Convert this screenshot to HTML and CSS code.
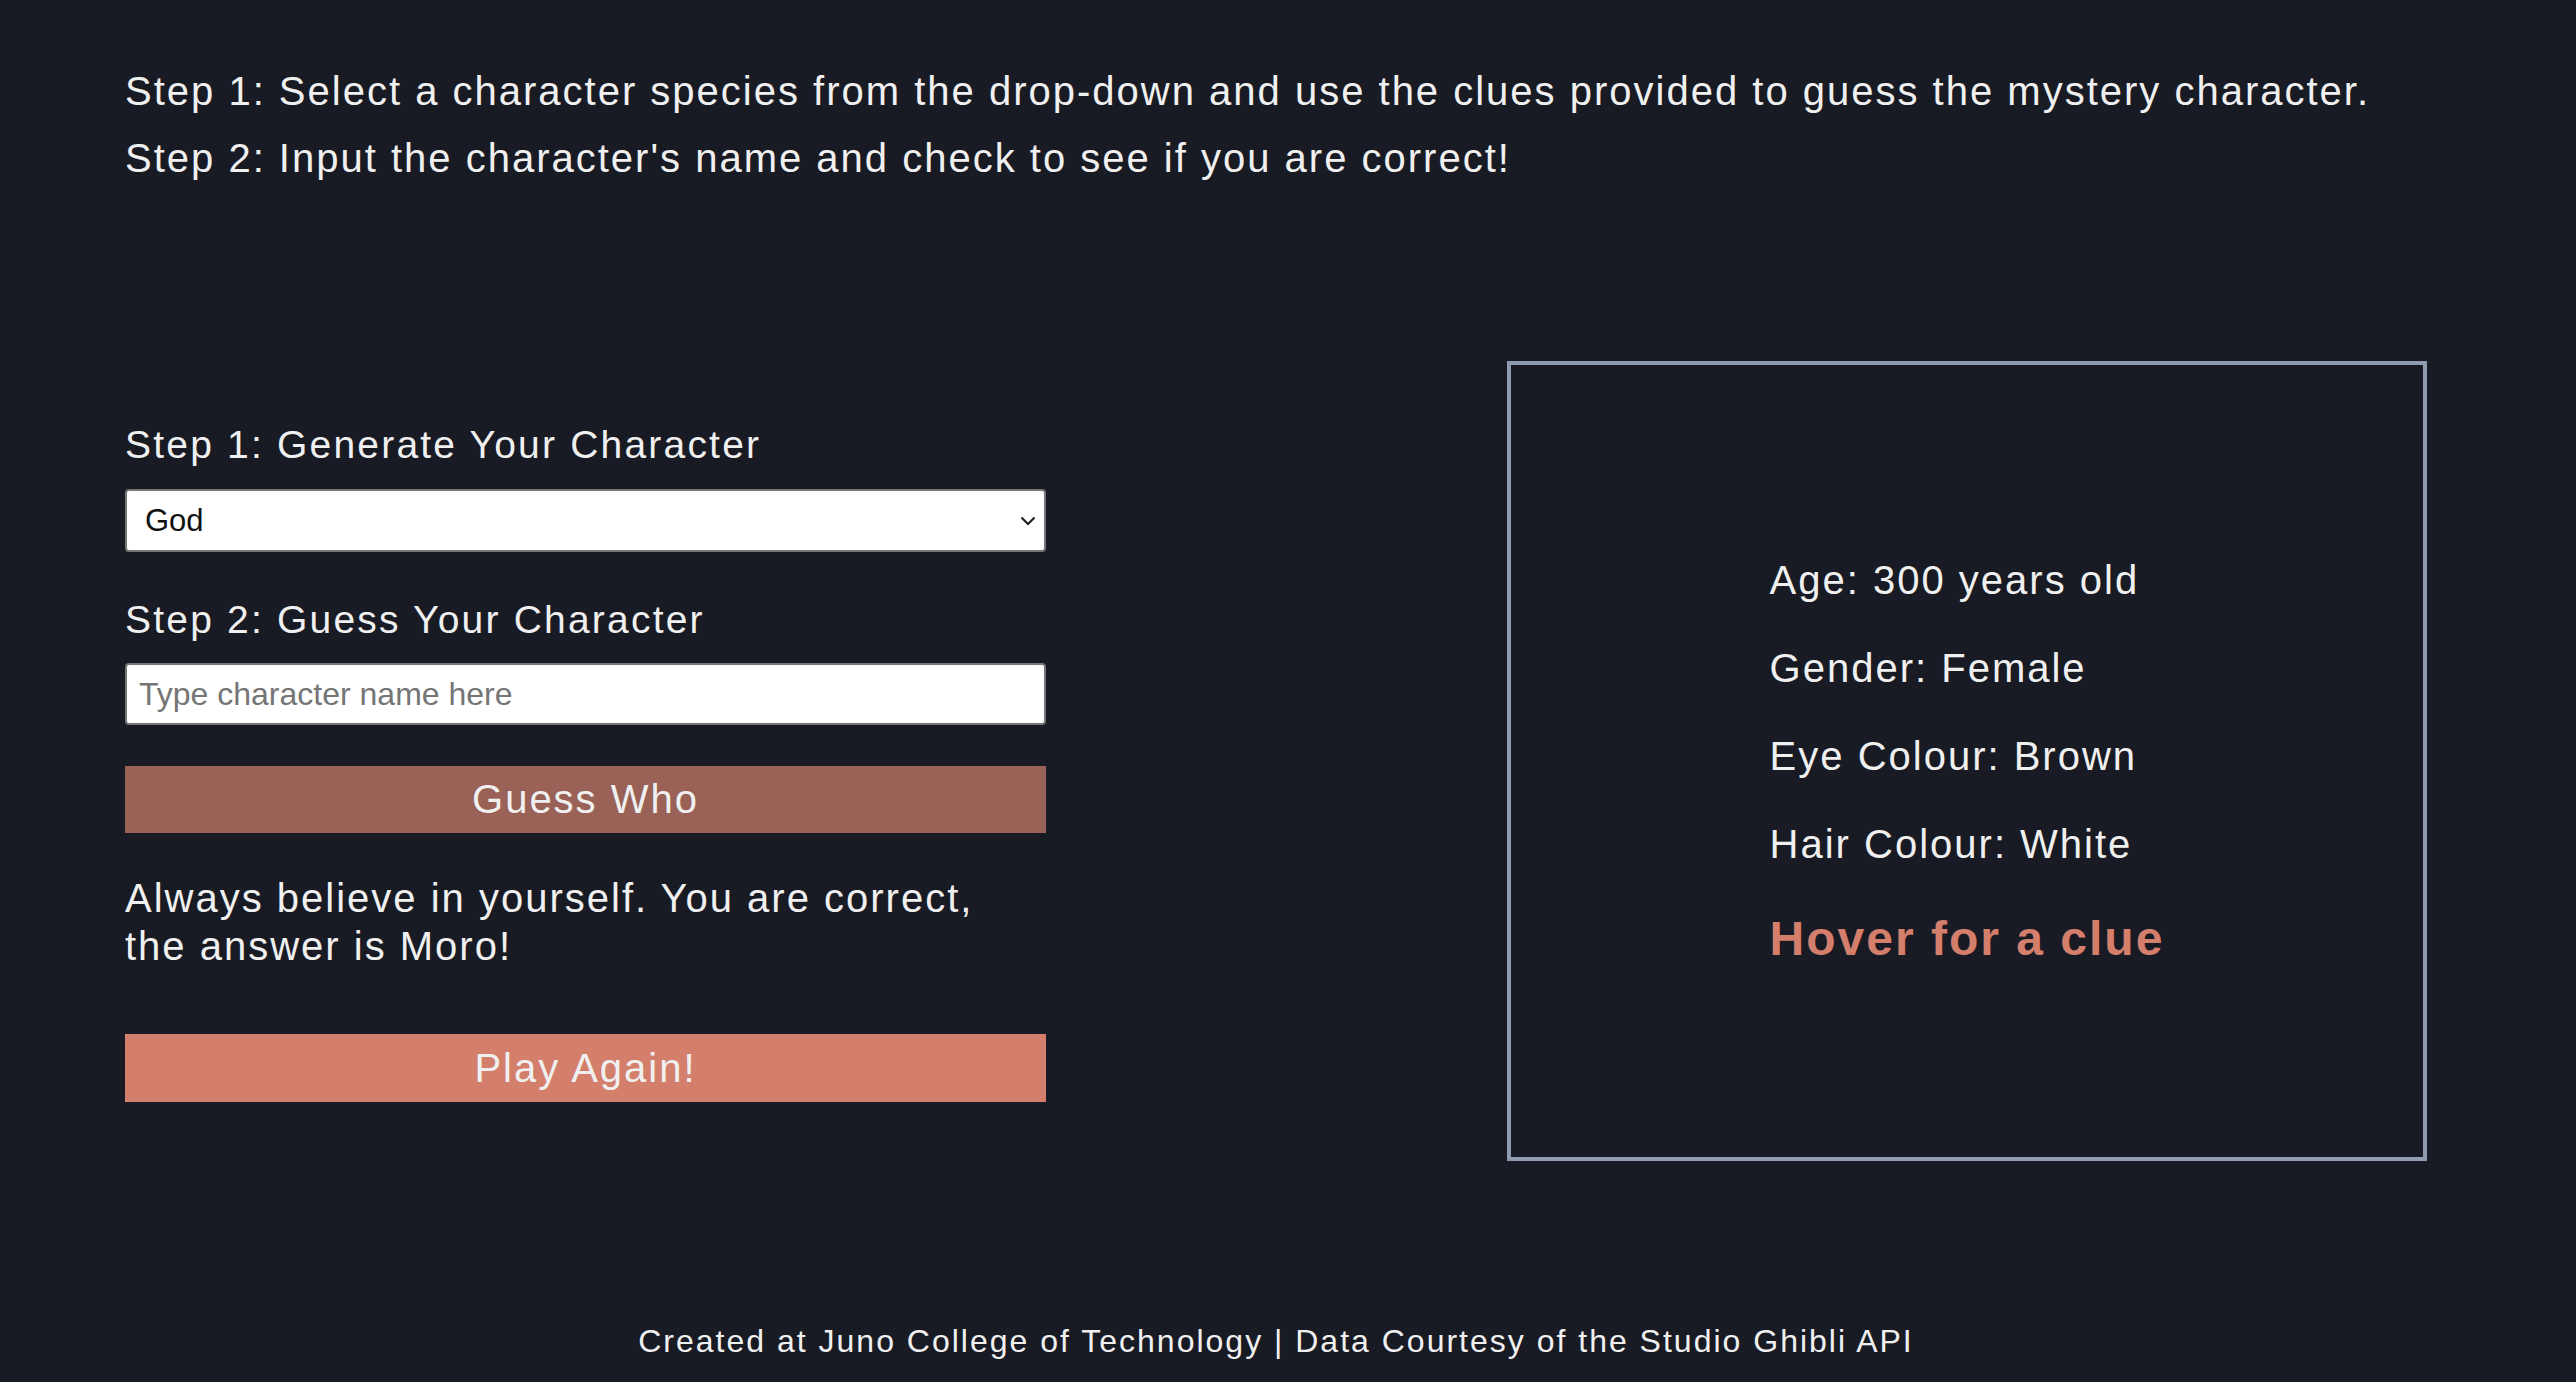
FILE: index.html
```html
<!DOCTYPE html>
<html lang="en">
<head>
<meta charset="utf-8">
<title>Ghibli Guess Who</title>
<link rel="stylesheet" href="styles.css">
</head>
<body>
<div class="wrapper">
  <header class="intro">
    <p>Step 1: Select a character species from the drop-down and use the clues provided to guess the mystery character.</p>
    <p>Step 2: Input the character's name and check to see if you are correct!</p>
  </header>

  <main class="game">
    <section class="controls">
      <h2 class="step">Step 1: Generate Your Character</h2>
      <div class="select-wrap">
        <select class="species">
          <option>God</option>
        </select>
        <svg class="chevron" width="16" height="10" viewBox="0 0 16 10" aria-hidden="true"><path d="M1.5 1.5 L8 8 L14.5 1.5" fill="none" stroke="#1a1a1a" stroke-width="2"/></svg>
      </div>
      <h2 class="step step-two">Step 2: Guess Your Character</h2>
      <input class="guess" type="text" placeholder="Type character name here">
      <button class="btn btn-guess" type="button">Guess Who</button>
      <p class="message">Always believe in yourself. You are correct, the answer is Moro!</p>
      <button class="btn btn-again" type="button">Play Again!</button>
    </section>

    <section class="clues">
      <div class="clue-list">
        <p class="clue">Age: 300 years old</p>
        <p class="clue">Gender: Female</p>
        <p class="clue">Eye Colour: Brown</p>
        <p class="clue">Hair Colour: White</p>
        <p class="hover">Hover for a clue</p>
      </div>
    </section>
  </main>

  <footer class="footer">
    <p>Created at Juno College of Technology | Data Courtesy of the Studio Ghibli API</p>
  </footer>
</div>
</body>
</html>
```

FILE: styles.css
```css
* {
  box-sizing: border-box;
}

html, body {
  margin: 0;
  padding: 0;
}

body {
  background: #191b24;
  color: #f0f0f0;
  font-family: "Liberation Sans", Arial, Helvetica, sans-serif;
  letter-spacing: 2px;
}

.wrapper {
  margin-left: 125px;
  width: 2302px;
}

.intro {
  padding-top: 68px;
}

.intro p {
  margin: 0 0 21px;
  font-size: 40px;
  line-height: 46px;
}

.game {
  display: flex;
  justify-content: space-between;
  align-items: flex-start;
  margin-top: 180px;
}

.controls {
  width: 921px;
  margin-top: 63px;
  display: flex;
  flex-direction: column;
}

.step {
  margin: 0;
  font-weight: normal;
  font-size: 39px;
  line-height: 41px;
  letter-spacing: 2.2px;
}

.step-two {
  margin-top: 47px;
}

.select-wrap {
  position: relative;
  margin-top: 24px;
}

.species {
  display: block;
  width: 100%;
  height: 63px;
  appearance: none;
  -webkit-appearance: none;
  background: #ffffff;
  border: 2px solid #767676;
  border-radius: 4px;
  padding: 0 0 0 18px;
  font-family: "Liberation Sans", Arial, sans-serif;
  font-size: 31px;
  letter-spacing: 0;
  color: #111111;
}

.chevron {
  position: absolute;
  right: 10px;
  top: 27px;
  pointer-events: none;
}

.guess {
  display: block;
  width: 100%;
  height: 62px;
  margin-top: 23px;
  background: #ffffff;
  border: 2px solid #767676;
  border-radius: 4px;
  padding: 0 0 0 12px;
  font-family: "Liberation Sans", Arial, sans-serif;
  font-size: 32px;
  letter-spacing: 0;
  color: #111111;
}

.guess::placeholder {
  color: #757575;
}

.btn {
  display: block;
  width: 100%;
  border: none;
  color: #f0f0f0;
  font-family: "Liberation Sans", Arial, sans-serif;
  font-size: 40px;
  letter-spacing: 2px;
  padding: 0;
}

.btn-guess {
  margin-top: 41px;
  height: 67px;
  background: #9a6257;
}

.btn-again {
  margin-top: 64px;
  height: 68px;
  background: #d47e6c;
}

.message {
  margin: 41px 0 0;
  font-size: 40px;
  line-height: 48px;
}

.clues {
  width: 920px;
  height: 800px;
  border: 4px solid #8e9bb0;
  display: flex;
  align-items: center;
  justify-content: center;
}

.clue-list {
  display: flex;
  flex-direction: column;
}

.clue {
  margin: 0 0 42px;
  font-size: 40px;
  line-height: 46px;
}

.hover {
  margin: 2px 0 0;
  font-size: 48px;
  line-height: 55px;
  font-weight: bold;
  color: #d47e6c;
}

.footer {
  margin-top: 162px;
  text-align: center;
}

.footer p {
  margin: 0;
  font-size: 32px;
  line-height: 37px;
}
```
